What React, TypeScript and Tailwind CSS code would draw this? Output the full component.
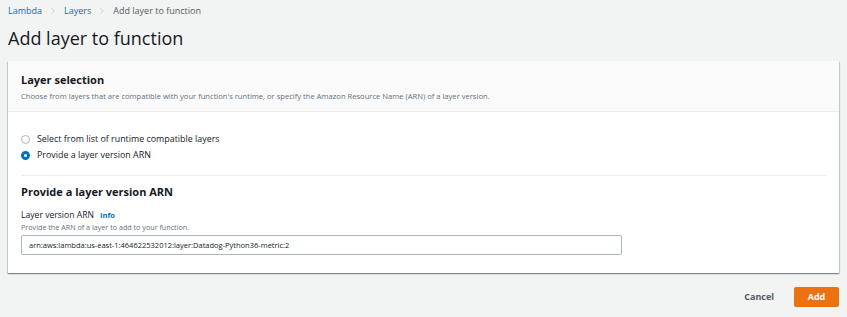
import { ChevronRight } from "lucide-react";

const font = { fontFamily: "'Open Sans', 'Noto Sans', sans-serif" };

const Breadcrumbs = () => (
  <div className="flex items-center gap-[6px] text-[9px] leading-[22px] h-[22px]">
    <span className="text-[#0073bb]">Lambda</span>
    <ChevronRight className="size-[10px] text-[#aab7b8]" strokeWidth={1.5} />
    <span className="text-[#0073bb]">Layers</span>
    <ChevronRight className="size-[10px] text-[#aab7b8]" strokeWidth={1.5} />
    <span className="text-[#545b64]">Add layer to function</span>
  </div>
);

const Radio = ({ checked, label }: { checked?: boolean; label: string }) => (
  <label className="flex items-center gap-[7px] h-[16px]">
    {checked ? (
      <span className="size-[9px] rounded-full border-[3px] border-[#0073bb] bg-white" />
    ) : (
      <span className="size-[9px] rounded-full border border-[#aab7b8] bg-white" />
    )}
    <span className="text-[8.9px] leading-[16px] text-[#16191f]">{label}</span>
  </label>
);

export default function App() {
  return (
    <div className="w-[847px] h-[317px] bg-[#f2f3f3] px-[8px] overflow-hidden" style={font}>
      <Breadcrumbs />
      <h1 className="text-[18px] leading-[28px] text-[#16191f] mt-[2px] mb-[9px]">Add layer to function</h1>

      <div className="bg-white shadow-[0_1px_1px_0_rgba(0,28,36,0.3),1px_1px_1px_0_rgba(0,28,36,0.15),-1px_1px_1px_0_rgba(0,28,36,0.15)] w-[831px]">
        <div className="bg-[#fafafa] border-b border-[#eaeded] px-[13px] pt-[11px] pb-[9px]">
          <h2 className="text-[11px] font-bold text-[#16191f] leading-[16px]">Layer selection</h2>
          <p className="mt-[2px] text-[7.6px] text-[#687078] leading-[12px]">
            Choose from layers that are compatible with your function's runtime, or specify the Amazon Resource Name (ARN) of a layer version.
          </p>
        </div>

        <div className="px-[13px]">
          <div className="flex flex-col pt-[19px] pb-[12px] border-b border-[#eaeded]">
            <Radio label="Select from list of runtime compatible layers" />
            <Radio checked label="Provide a layer version ARN" />
          </div>

          <div className="pt-[8px] pb-[18px]">
            <h3 className="text-[11px] font-bold text-[#16191f] leading-[16px]">Provide a layer version ARN</h3>
            <div className="mt-[9px] flex items-center gap-[6px] h-[12px]">
              <span className="text-[8.6px] leading-[12px] text-[#16191f]">Layer version ARN</span>
              <span className="text-[7.6px] leading-[12px] font-bold text-[#0073bb]">Info</span>
            </div>
            <p className="text-[7.2px] text-[#687078] leading-[12px]">Provide the ARN of a layer to add to your function.</p>
            <div className="mt-[2px] w-[601px] h-[20px] border border-[#aab7b8] rounded-[2px] flex items-center px-[7px] text-[7.5px] leading-[18px] text-[#16191f]">
              arn:aws:lambda:us-east-1:464622532012:layer:Datadog-Python36-metric:2
            </div>
          </div>
        </div>
      </div>

      <div className="flex justify-end items-center gap-[20px] mt-[14px] w-[831px]">
        <span className="text-[9px] leading-[20px] font-bold text-[#545b64]">Cancel</span>
        <span className="bg-[#ec7211] text-white text-[9px] leading-[20px] font-bold w-[45px] h-[20px] flex items-center justify-center rounded-[2px]">Add</span>
      </div>
    </div>
  );
}
